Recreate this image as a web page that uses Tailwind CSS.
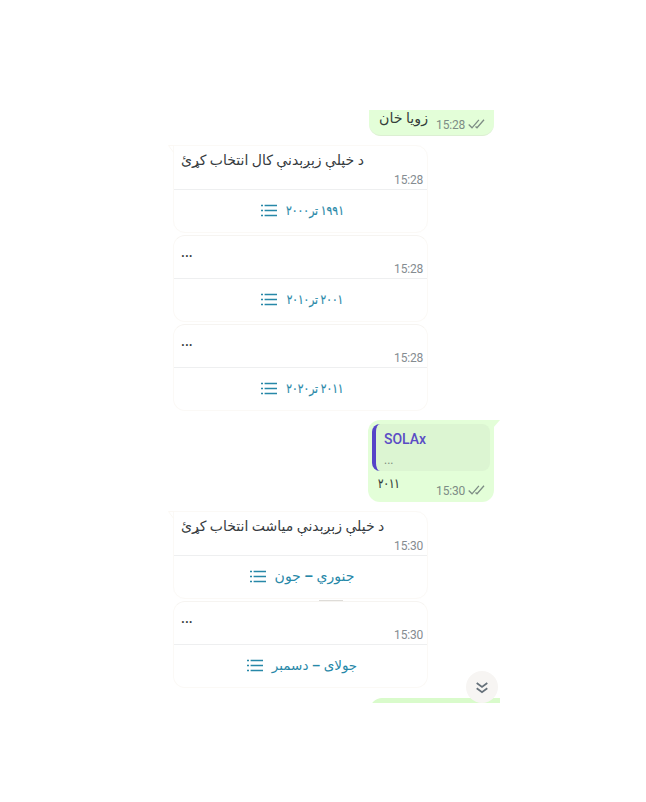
<!DOCTYPE html>
<html lang="ps">
<head>
    <meta charset="UTF-8">
    <meta name="viewport" content="width=device-width, initial-scale=1.0">
    <title>SOLAx chat</title>
    <script src="https://cdn.jsdelivr.net/npm/@tailwindcss/browser@4"></script>
</head>
<body class="bg-white font-['Roboto','DejaVu_Sans',sans-serif] overflow-hidden">
    <svg class="hidden">
        <symbol id="list" viewBox="0 0 16 14">
            <path d="M0 1.5h2M0 6.5h2M0 11.5h2M3.6 1.5H16M3.6 6.5H16M3.6 11.5H16" fill="none" stroke="currentColor" stroke-width="1.7"/>
        </symbol>
        <symbol id="ticks" viewBox="0 0 17 10">
            <path d="M.7 5.5 4 8.8 10.9.8M7.5 7.4 9 8.8 16 .8" fill="none" stroke="currentColor" stroke-width="1.3"/>
        </symbol>
        <symbol id="tail" viewBox="0 0 7 12">
            <path d="M0 0h7L0 8z" fill="currentColor"/>
        </symbol>
    </svg>

    <!-- Chat viewport -->
    <main class="relative mt-[110px] ml-[167px] w-[333px] h-[593px] overflow-hidden">
        <!-- Sent: name -->
        <div class="ml-[202px] w-[125px] h-[26px] rounded-b-xl bg-[#e3fed8] border-b border-[#dcefd2] flex justify-between pl-[10px] pr-[9px]">
            <span dir="rtl" class="text-[14.2px] leading-[17px] text-[#333c38] whitespace-nowrap">زویا خان</span>
            <span class="flex items-center gap-[3px] h-[14px] mt-2 text-xs tracking-[-0.2px] text-[#7d8c85]">15:28 <svg class="w-[17px] h-[10px] -mt-[2px]"><use href="#ticks"/></svg></span>
        </div>

        <!-- Received: year -->
        <section class="relative mt-[9px] ml-[6px] w-[255px] h-[88px] rounded-b-xl rounded-tr-xl border border-[#fbf9f6]">
            <svg class="absolute -left-[6px] -top-px w-[6px] h-[9px]"><path d="M6 .5H.5L6 8" fill="none" stroke="#fbf8f4"/></svg>
            <div class="flex justify-between h-[44px] border-b border-[#eeeff0] pl-[7px] pr-1">
                <p dir="rtl" class="text-[14px] leading-[29px] text-[#363b40] whitespace-nowrap">د خپلې زېږېدنې کال انتخاب کړئ</p>
                <time class="self-end mb-px text-xs tracking-[-0.2px] text-[#858c91]">15:28</time>
            </div>
            <div class="flex items-center justify-center gap-[9px] h-[42px] pl-[3px] text-[#2788a8]">
                <svg class="w-4 h-[14px]"><use href="#list"/></svg>
                <span dir="rtl" class="text-[13px] whitespace-nowrap scale-x-[.83] -mx-[6px] [-webkit-text-stroke:0.2px]">۱۹۹۱ تر۲۰۰۰</span>
            </div>
        </section>
        <section class="mt-[2px] ml-[6px] w-[255px] h-[87px] rounded-xl border border-[#fbf9f6] border-t-[#f6f4f1]">
            <div class="flex justify-between h-[43px] border-b border-[#eeeff0] pl-[7px] pr-1">
                <p class="text-sm font-medium leading-[33px] text-[#363b40]">...</p>
                <time class="self-end mb-px text-xs tracking-[-0.2px] text-[#858c91]">15:28</time>
            </div>
            <div class="flex items-center justify-center gap-[9px] h-[42px] pl-[3px] text-[#2788a8]">
                <svg class="w-4 h-[14px]"><use href="#list"/></svg>
                <span dir="rtl" class="text-[13px] whitespace-nowrap scale-x-[.81] -mx-[6.5px] [-webkit-text-stroke:0.2px]">۲۰۰۱ تر۲۰۱۰</span>
            </div>
        </section>
        <section class="mt-[2px] ml-[6px] w-[255px] h-[87px] rounded-xl border border-[#fbf9f6] border-t-[#f6f4f1]">
            <div class="flex justify-between h-[43px] border-b border-[#eeeff0] pl-[7px] pr-1">
                <p class="text-sm font-medium leading-[33px] text-[#363b40]">...</p>
                <time class="self-end mb-px text-xs tracking-[-0.2px] text-[#858c91]">15:28</time>
            </div>
            <div class="flex items-center justify-center gap-[9px] h-[42px] pl-[3px] text-[#2788a8]">
                <svg class="w-4 h-[14px]"><use href="#list"/></svg>
                <span dir="rtl" class="text-[13px] whitespace-nowrap scale-x-[.82] -mx-[6px] [-webkit-text-stroke:0.2px]">۲۰۱۱ تر۲۰۲۰</span>
            </div>
        </section>

        <!-- Sent: quoted reply -->
        <div class="relative mt-[9px] ml-[201px] w-[126px] h-[82px] rounded-b-xl rounded-tl-xl bg-[#e3fed8] p-1">
            <svg class="absolute -right-[6px] top-0 w-[7px] h-3 text-[#e3fed8]"><use href="#tail"/></svg>
            <div class="h-[47px] rounded-lg overflow-hidden bg-[#dcf5d2] border-l-4 border-[#5644c8] pl-2">
                <p class="text-sm font-medium leading-[31px] text-[#5a4cc5]">SOLAx</p>
                <p class="text-xs leading-[10px] text-[#7c8b7d]">...</p>
            </div>
            <div class="flex justify-between pl-[6px] pr-[5px]">
                <span dir="rtl" class="text-[13px] leading-[26px] text-[#303936] scale-x-[.78] origin-left [-webkit-text-stroke:0.2px]">۲۰۱۱</span>
                <span class="flex items-center gap-[3px] h-[14px] mt-[13px] text-xs tracking-[-0.2px] text-[#7d8c85]">15:30 <svg class="w-[17px] h-[10px] -mt-[2px]"><use href="#ticks"/></svg></span>
            </div>
        </div>

        <!-- Received: month -->
        <section class="relative mt-[9px] ml-[6px] w-[255px] h-[88px] rounded-b-xl rounded-tr-xl border border-[#fbf9f6]">
            <svg class="absolute -left-[6px] -top-px w-[6px] h-[9px]"><path d="M6 .5H.5L6 8" fill="none" stroke="#fbf8f4"/></svg>
            <div class="flex justify-between h-[44px] border-b border-[#eeeff0] pl-[7px] pr-1">
                <p dir="rtl" class="text-[14px] leading-[29px] text-[#363b40] whitespace-nowrap">د خپلې زېږېدنې میاشت انتخاب کړئ</p>
                <time class="self-end mb-px text-xs tracking-[-0.2px] text-[#858c91]">15:30</time>
            </div>
            <div class="flex items-center justify-center gap-[9px] h-[42px] pl-[3px] text-[#2788a8]">
                <svg class="w-4 h-[14px]"><use href="#list"/></svg>
                <span dir="rtl" class="text-[14px] leading-4 pb-[2px] whitespace-nowrap">جنوري <b class="font-bold">–</b> جون</span>
            </div>
        </section>
        <section class="relative mt-[2px] ml-[6px] w-[255px] h-[87px] rounded-xl border border-[#fbf9f6] border-t-[#f6f4f1]">
            <span class="absolute left-[145px] -top-[2px] w-6 h-px bg-[#dedcd8]"></span>
            <div class="flex justify-between h-[43px] border-b border-[#eeeff0] pl-[7px] pr-1">
                <p class="text-sm font-medium leading-[33px] text-[#363b40]">...</p>
                <time class="self-end mb-px text-xs tracking-[-0.2px] text-[#858c91]">15:30</time>
            </div>
            <div class="flex items-center justify-center gap-[9px] h-[42px] pl-[3px] text-[#2788a8]">
                <svg class="w-4 h-[14px]"><use href="#list"/></svg>
                <span dir="rtl" class="text-[13.5px] leading-4 pb-[2px] whitespace-nowrap">جولای <b class="font-bold">–</b> دسمبر</span>
            </div>
        </section>

        <!-- Next sent message -->
        <div class="mt-[10px] ml-[203px] w-[130px] h-5 rounded-tl-xl bg-[#d9fbcb]"></div>

        <!-- Scroll to bottom -->
        <button class="absolute left-[299px] top-[561px] size-8 rounded-full bg-[#f7f5f3] flex items-center justify-center text-[#66717a]">
            <svg class="w-3 h-3 mt-[2px]" viewBox="0 0 12 12"><path d="m.7 1 5.3 4 5.3-4M.7 6.3l5.3 4 5.3-4" fill="none" stroke="currentColor" stroke-width="1.7"/></svg>
        </button>
    </main>
</body>
</html>
